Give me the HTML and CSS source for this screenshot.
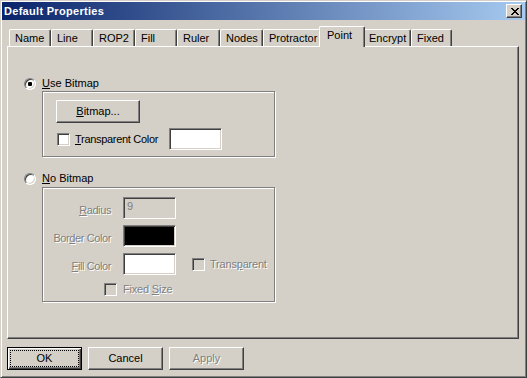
FILE: index.html
```html
<!DOCTYPE html>
<html>
<head>
<meta charset="utf-8">
<link rel="stylesheet" href="styles.css">
</head>
<body>
<div class="window">
  <div class="titlebar">
    <span class="title">Default Properties</span>
    <span class="close"><svg width="8" height="7" viewBox="0 0 8 7" shape-rendering="crispEdges"><path fill="#000" d="M0 0h2v1H0zM6 0h2v1H6zM1 1h2v1H1zM5 1h2v1H5zM2 2h4v1H2zM3 3h2v1H3zM2 4h4v1H2zM1 5h2v1H1zM5 5h2v1H5zM0 6h2v1H0zM6 6h2v1H6z"/></svg></span>
  </div>
  <div class="tabs">
    <div class="tab t-name">Name</div>
    <div class="tab t-line">Line</div>
    <div class="tab t-rop">ROP2</div>
    <div class="tab t-fill">Fill</div>
    <div class="tab t-ruler">Ruler</div>
    <div class="tab t-nodes">Nodes</div>
    <div class="tab t-prot">Protractor</div>
    <div class="tab t-point active">Point</div>
    <div class="tab t-enc">Encrypt</div>
    <div class="tab t-fixed">Fixed</div>
  </div>
  <div class="panel">
    <div class="opt"><span class="radio on"></span><span><u>U</u>se Bitmap</span></div>
    <div class="group g1">
      <div class="btn bitmap"><span><u>B</u>itmap...</span></div>
      <div class="row">
        <span class="check first"></span>
        <span class="clabel"><u>T</u>ransparent Color</span>
        <span class="field"></span>
      </div>
    </div>
    <div class="opt opt2"><span class="radio"></span><span><u>N</u>o Bitmap</span></div>
    <div class="group g2">
      <div class="grid">
        <span class="lbl"><u>R</u>adius</span>
        <span class="field dis">9</span>
        <span></span>
        <span class="lbl">Bor<u>d</u>er Color</span>
        <span class="field black"></span>
        <span></span>
        <span class="lbl"><u>F</u>ill Color</span>
        <span class="field"></span>
        <span class="tcell"><span class="check dis"></span><span>Trans<u>p</u>arent</span></span>
      </div>
      <div class="fixed"><span class="check dis"></span><span>Fixed <u>S</u>ize</span></div>
    </div>
  </div>
  <div class="buttons">
    <div class="btn default">OK</div>
    <div class="btn">Cancel</div>
    <div class="btn disabled">Apply</div>
  </div>
</div>
</body>
</html>
```
FILE: styles.css
```css
html, body {
  margin: 0;
  padding: 0;
  background: #d4d0c8;
}

.window {
  width: 527px;
  height: 378px;
  box-sizing: border-box;
  background: #d4d0c8;
  border: 1px solid;
  border-color: #d4d0c8 #404040 #404040 #d4d0c8;
  box-shadow: inset 1px 1px 0 #fff, inset -1px -1px 0 #808080;
  padding: 1px;
  display: flex;
  flex-direction: column;
  font-family: "Liberation Sans", Arial, sans-serif;
  font-size: 11px;
  line-height: 13px;
  color: #000;
}

.titlebar {
  height: 18px;
  display: flex;
  align-items: center;
  background: linear-gradient(to right, #0a246a, #a6caf0);
  flex: none;
}

.title {
  flex: 1;
  padding-left: 2px;
  color: #fff;
  font-weight: bold;
  line-height: 18px;
  letter-spacing: 0.3px;
}

.close {
  width: 16px;
  height: 14px;
  margin-right: 3px;
  box-sizing: border-box;
  background: #d4d0c8;
  border: 1px solid;
  border-color: #fff #404040 #404040 #fff;
  box-shadow: inset -1px -1px 0 #808080;
  display: flex;
  align-items: center;
  padding-left: 4px;
}

.close svg {
  display: block;
}

.tabs {
  display: flex;
  align-items: flex-end;
  height: 20px;
  margin-top: 6px;
  padding-left: 7px;
  flex: none;
}

.tab {
  box-sizing: border-box;
  height: 17px;
  padding: 2px 0 0 5px;
  border-top: 1px solid #fff;
  border-left: 1px solid #fff;
  border-right: 1px solid #404040;
  box-shadow: inset -1px 0 0 #808080;
  border-radius: 2px 2px 0 0;
  white-space: nowrap;
  background: #d4d0c8;
  flex: none;
}

.t-name { width: 42px; }
.t-line { width: 42px; }
.t-rop { width: 42px; }
.t-fill { width: 42px; }
.t-ruler { width: 43px; }
.t-nodes { width: 43px; }
.t-prot { width: 58px; }
.t-point { width: 46px; }
.t-enc { width: 48px; }
.t-fixed { width: 41px; }

.tab.active {
  height: 21px;
  margin: 0 -2px -1px -2px;
  padding-left: 7px;
  position: relative;
  z-index: 1;
}

.panel {
  box-sizing: border-box;
  width: 512px;
  height: 293px;
  margin-left: 5px;
  border-top: 1px solid #fff;
  border-left: 1px solid #fff;
  border-right: 1px solid #404040;
  border-bottom: 1px solid #404040;
  box-shadow: inset -1px -1px 0 #808080;
  padding: 30px 0 0 16px;
  display: flex;
  flex-direction: column;
  align-items: flex-start;
  flex: none;
}

.opt {
  display: flex;
  align-items: center;
  gap: 6px;
  height: 13px;
}

.opt2 {
  margin-top: 15px;
}

.radio {
  width: 12px;
  height: 12px;
  box-sizing: border-box;
  border-radius: 50%;
  border: 1px solid;
  border-color: #808080 #fff #fff #808080;
  box-shadow: inset 1px 1px 0 #404040, inset -1px -1px 0 #d4d0c8;
  background: #fff;
  display: flex;
  align-items: center;
  justify-content: center;
  flex: none;
}

.radio.on::after {
  content: "";
  width: 4px;
  height: 4px;
  border-radius: 1px;
  background: #000;
}

.group {
  box-sizing: border-box;
  width: 233px;
  margin-left: 18px;
  border: 1px solid #808080;
  box-shadow: 1px 1px 0 #fff, inset 1px 1px 0 #fff;
}

.g1 {
  height: 66px;
  margin-top: 1px;
  padding: 8px 0 0 13px;
  display: flex;
  flex-direction: column;
  align-items: flex-start;
  gap: 5px;
}

.g2 {
  height: 115px;
  margin-top: 2px;
  padding-top: 9px;
  color: #808080;
  text-shadow: 1px 1px 0 #fff;
}

.row {
  display: flex;
  align-items: center;
  height: 22px;
}

.check {
  width: 13px;
  height: 13px;
  box-sizing: border-box;
  border: 1px solid;
  border-color: #808080 #fff #fff #808080;
  box-shadow: inset 1px 1px 0 #404040, inset -1px -1px 0 #d4d0c8;
  background: #fff;
  flex: none;
}

.check.first {
  margin-left: 1px;
}

.check.dis {
  background: #d4d0c8;
}

.clabel {
  margin-left: 5px;
  width: 94px;
  white-space: nowrap;
  letter-spacing: -0.3px;
}

.field {
  width: 53px;
  height: 22px;
  box-sizing: border-box;
  border: 1px solid;
  border-color: #808080 #fff #fff #808080;
  box-shadow: inset 1px 1px 0 #404040, inset -1px -1px 0 #d4d0c8;
  background: #fff;
  padding: 2px 0 0 3px;
  text-shadow: none;
  flex: none;
}

.field.dis {
  background: #d4d0c8;
  color: #808080;
}

.field.black {
  background: #000;
}

.grid {
  display: grid;
  grid-template-columns: 68px 53px auto;
  grid-auto-rows: 22px;
  column-gap: 12px;
  row-gap: 6px;
}

.lbl {
  text-align: right;
  padding-top: 7px;
  white-space: nowrap;
  letter-spacing: -0.4px;
}

.tcell {
  display: flex;
  align-items: center;
  gap: 5px;
  margin-left: 4px;
  white-space: nowrap;
  letter-spacing: -0.2px;
}

.fixed {
  display: flex;
  align-items: center;
  gap: 6px;
  height: 13px;
  margin: 8px 0 0 61px;
  letter-spacing: -0.2px;
}

.buttons {
  display: flex;
  gap: 6px;
  margin: 8px 0 0 5px;
  flex: none;
}

.btn {
  box-sizing: border-box;
  width: 75px;
  height: 23px;
  display: flex;
  align-items: center;
  justify-content: center;
  border: 1px solid;
  border-color: #fff #404040 #404040 #fff;
  box-shadow: inset -1px -1px 0 #808080;
  background: #d4d0c8;
  flex: none;
}

.btn.bitmap {
  width: 84px;
}

.btn.default {
  border-color: #000;
  box-shadow: inset 1px 1px 0 #fff, inset -1px -1px 0 #404040, inset -2px -2px 0 #808080;
  outline: 1px dotted #000;
  outline-offset: -4px;
}

.btn.disabled {
  color: #808080;
  text-shadow: 1px 1px 0 #fff;
}
```
